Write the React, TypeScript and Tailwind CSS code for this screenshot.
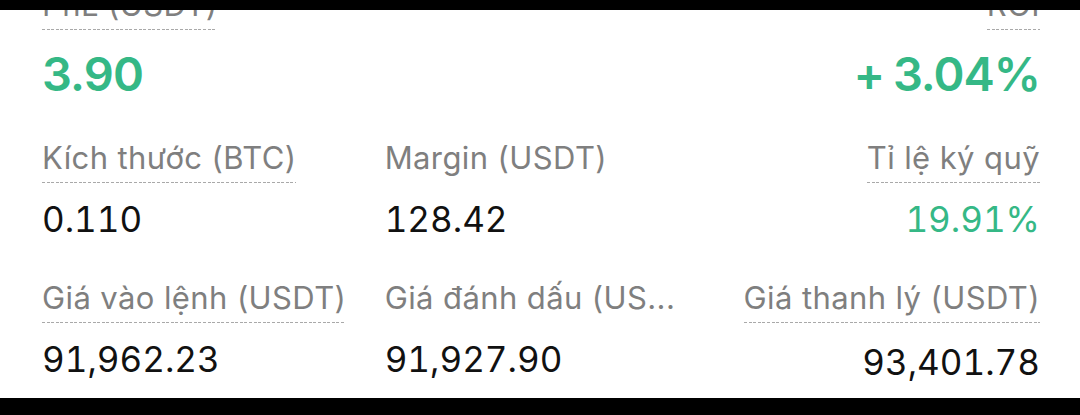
import React from "react";

const dots =
  "h-px bg-[repeating-linear-gradient(to_right,#a9a9a9_0px,#a9a9a9_3px,transparent_3px,transparent_4.6px)]";

function Label({ text, underline, right }: { text: string; underline?: boolean; right?: boolean }) {
  return (
    <div className={`flex ${right ? "justify-end" : "justify-start"}`}>
      <div className="inline-flex flex-col">
        <span className="text-[31px] leading-[36px] tracking-[0.4px] text-[#7f7f7f] whitespace-nowrap">{text}</span>
        <div className={`mt-[6px] ${underline ? dots : "h-px"}`} />
      </div>
    </div>
  );
}

const val = "text-[35px] leading-[40px] tracking-[0px] tabular-nums";

export default function App() {
  return (
    <div className="w-[1080px] h-[415px] bg-black flex flex-col" style={{ fontFamily: "Inter, 'Noto Sans', sans-serif" }}>
      <div className="h-[10px] shrink-0" />
      <div className="h-[388px] bg-white overflow-hidden pl-[42px] pr-[40px]">
        {/* row 1 */}
        <div className="-mt-[23px] flex justify-between">
          <div className="flex flex-col items-start">
            <Label text="PnL (USDT)" underline />
            <div className="mt-[16px] text-[47px] leading-[56px] font-semibold tracking-[-0.8px] text-[#35b886]">3.90</div>
          </div>
          <div className="flex flex-col items-end">
            <Label text="ROI" underline right />
            <div className="mt-[16px] text-[47px] leading-[56px] font-semibold tracking-[-1px] [word-spacing:-2px] text-[#35b886]">+ 3.04%</div>
          </div>
        </div>
        {/* rows 2-3 */}
        <div className="grid grid-cols-3 gap-x-[30px] mt-[38px] gap-y-[41px]">
          <div>
            <Label text="Kích thước (BTC)" underline />
            <div className={`mt-[16px] ${val} text-[#111]`}>0.110</div>
          </div>
          <div>
            <Label text="Margin (USDT)" />
            <div className={`mt-[16px] ${val} text-[#111]`}>128.42</div>
          </div>
          <div className="text-right">
            <Label text="Tỉ lệ ký quỹ" underline right />
            <div className={`mt-[16px] ${val} text-[#35b886]`}>19.91%</div>
          </div>
          <div>
            <Label text="Giá vào lệnh (USDT)" underline />
            <div className={`mt-[16px] ${val} text-[#111]`}>91,962.23</div>
          </div>
          <div>
            <Label text="Giá đánh dấu (US..." />
            <div className={`mt-[16px] ${val} text-[#111]`}>91,927.90</div>
          </div>
          <div className="text-right">
            <Label text="Giá thanh lý (USDT)" underline right />
            <div className={`mt-[19px] ${val} text-[#111]`}>93,401.78</div>
          </div>
        </div>
      </div>
    </div>
  );
}
